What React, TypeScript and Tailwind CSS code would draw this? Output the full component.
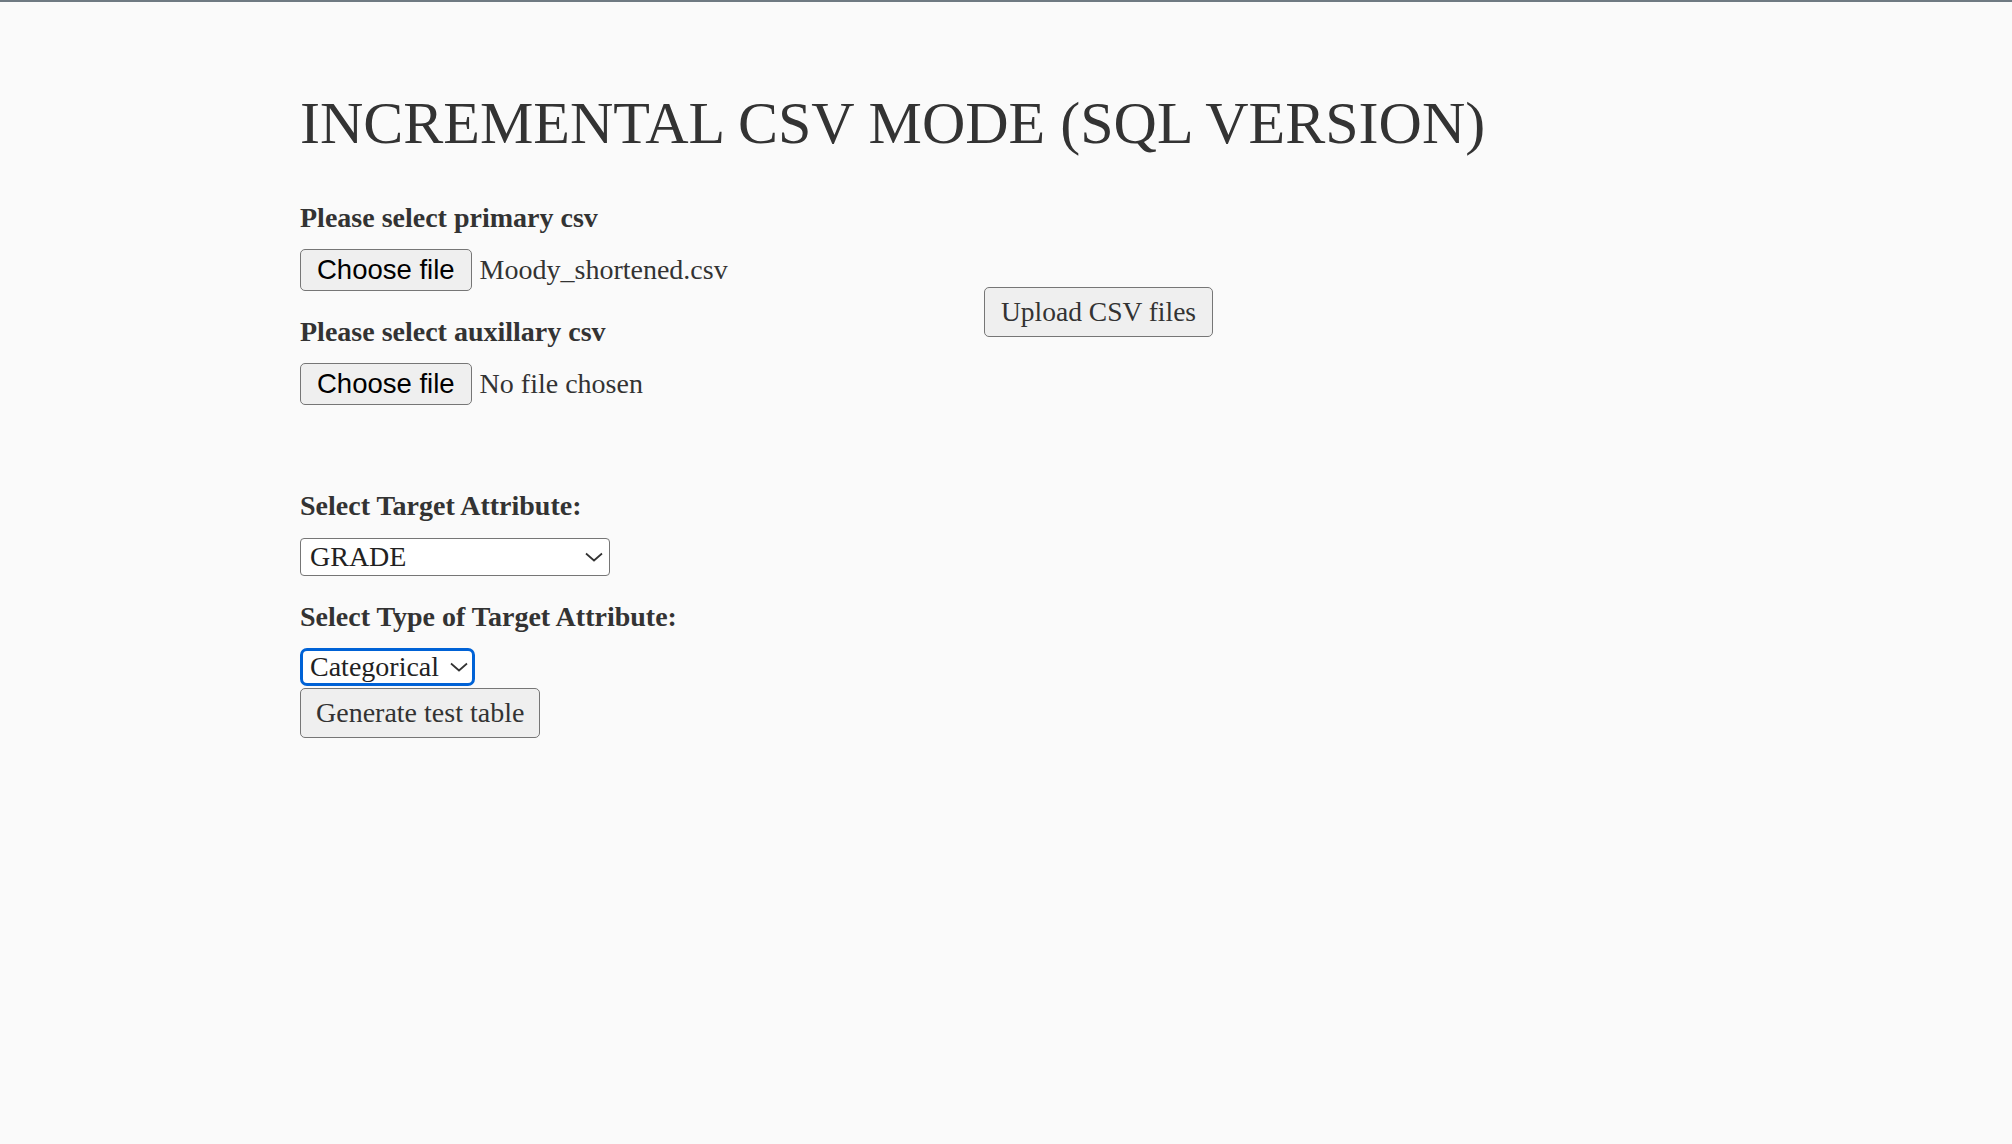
import type { ReactNode } from "react";

function Chevron() {
  return (
    <svg
      width="18"
      height="10"
      viewBox="0 0 18 10"
      className="pointer-events-none absolute right-[7px] top-1/2 -translate-y-1/2"
      aria-hidden
    >
      <polyline points="1,1.5 9,8.5 17,1.5" fill="none" stroke="#333" strokeWidth="1.7" />
    </svg>
  );
}

function FieldLabel({ children, className = "" }: { children: ReactNode; className?: string }) {
  return <label className={`block text-[28px] leading-[32px] font-bold ${className}`}>{children}</label>;
}

function FilePicker({ fileName, className = "" }: { fileName: string; className?: string }) {
  return (
    <div className={`flex items-center gap-[8px] ${className}`}>
      <button className="h-[42px] rounded-[5px] border border-[#767676] bg-[#efefef] px-[16px] font-['Liberation_Sans',Arial,sans-serif] text-[27.5px] leading-[32px] text-black">
        Choose file
      </button>
      <span className="text-[28px] leading-[32px]">{fileName}</span>
    </div>
  );
}

function Select({
  value,
  options,
  focused = false,
  className = "",
}: {
  value: string;
  options: string[];
  focused?: boolean;
  className?: string;
}) {
  return (
    <div className={`relative ${className}`}>
      <select
        defaultValue={value}
        className={
          focused
            ? "h-[38px] w-full appearance-none rounded-[7px] border-[3px] border-[#0062d6] bg-white pl-[7px] text-[28px] leading-[32px] text-[#222] outline-none"
            : "h-[38px] w-full appearance-none rounded-[4px] border border-[#767676] bg-white pl-[9px] text-[28px] leading-[32px] text-[#222] outline-none"
        }
      >
        {options.map((o) => (
          <option key={o}>{o}</option>
        ))}
      </select>
      <Chevron />
    </div>
  );
}

export default function App() {
  return (
    <div className="min-h-screen border-t-2 border-[#6f7a82] bg-[#fafafa] font-['Liberation_Serif','Times_New_Roman',serif] text-[#333]">
      <div className="px-[300px] pt-[92px]">
        <h1 className="text-[60px] leading-[59px] font-normal">INCREMENTAL CSV MODE (SQL VERSION)</h1>

        <div className="mt-[49px] flex items-start">
          <div className="w-[684px]">
            <FieldLabel>Please select primary csv</FieldLabel>
            <FilePicker fileName="Moody_shortened.csv" className="mt-[15px]" />
            <FieldLabel className="mt-[25px]">Please select auxillary csv</FieldLabel>
            <FilePicker fileName="No file chosen" className="mt-[15px]" />
          </div>
          <button className="mt-[85px] h-[50px] rounded-[5px] border border-[#767676] bg-[#efefef] px-[16px] text-[27.5px] leading-[32px] text-[#333]">
            Upload CSV files
          </button>
        </div>

        <FieldLabel className="mt-[85px]">Select Target Attribute:</FieldLabel>
        <Select value="GRADE" options={["GRADE"]} className="mt-[16px] w-[310px]" />

        <FieldLabel className="mt-[25px]">Select Type of Target Attribute:</FieldLabel>
        <Select value="Categorical" options={["Categorical", "Numerical"]} focused className="mt-[15px] w-[175px]" />
        <button className="mt-[2px] block h-[50px] rounded-[5px] border border-[#767676] bg-[#efefef] px-[15px] text-[28px] leading-[32px] text-[#333]">
          Generate test table
        </button>
      </div>
    </div>
  );
}
